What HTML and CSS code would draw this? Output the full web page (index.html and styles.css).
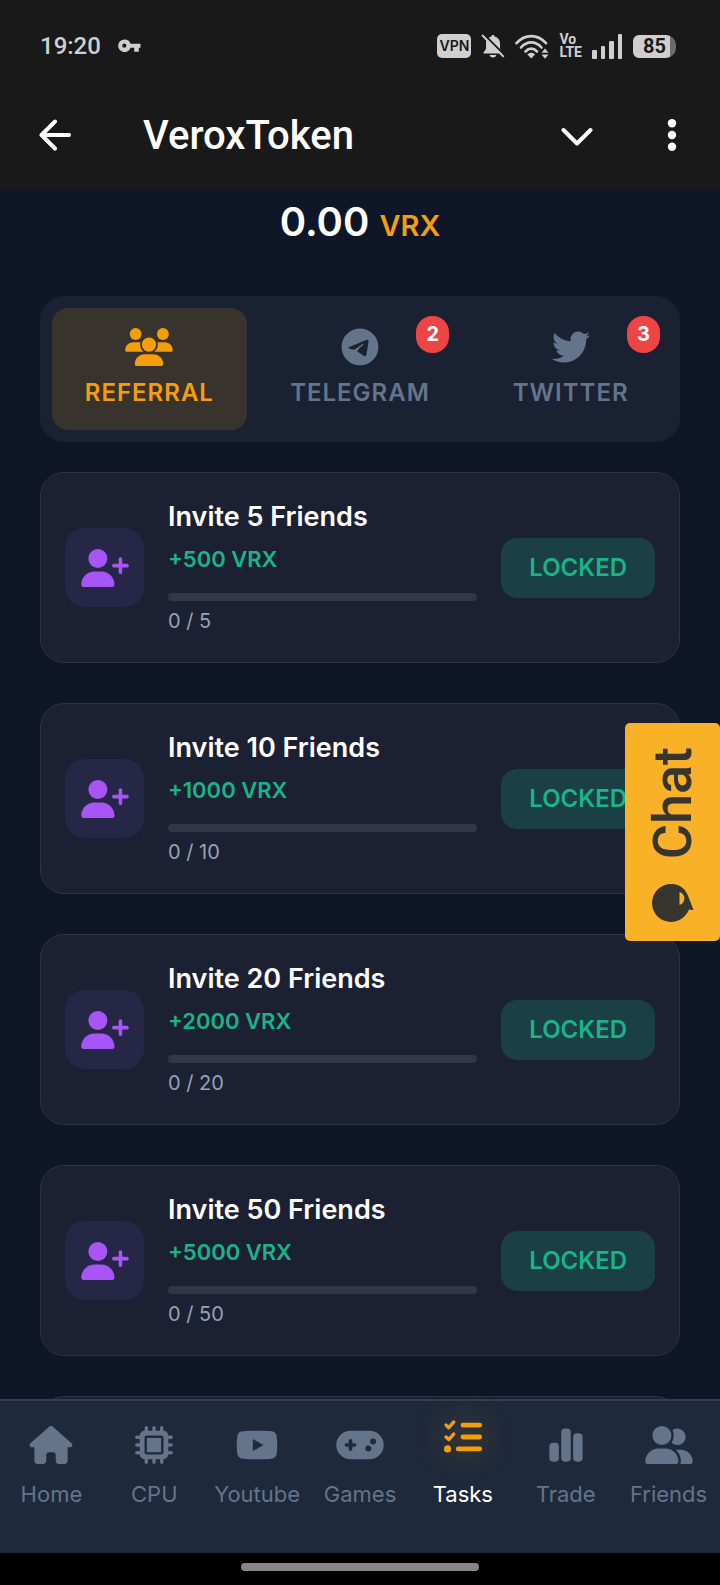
FILE: index.html
```html
<!DOCTYPE html>
<html lang="en">
<head>
    <meta charset="UTF-8">
    <meta name="viewport" content="width=device-width, initial-scale=1.0">
    <title>VeroxToken</title>
    <link rel="stylesheet" href="styles.css">
</head>
<body>
    <svg class="sprite" aria-hidden="true">
        <symbol id="user-plus" viewBox="0 0 640 512">
            <path d="M96 128a128 128 0 1 1 256 0A128 128 0 1 1 96 128zM0 482.3C0 383.8 79.8 304 178.3 304h91.4C368.2 304 448 383.8 448 482.3c0 16.4-13.3 29.7-29.7 29.7H29.7C13.3 512 0 498.7 0 482.3zM504 312V248H440c-13.3 0-24-10.7-24-24s10.7-24 24-24h64V136c0-13.3 10.7-24 24-24s24 10.7 24 24v64h64c13.3 0 24 10.7 24 24s-10.7 24-24 24H552v64c0 13.3-10.7 24-24 24s-24-10.7-24-24z"/>
        </symbol>
    </svg>

    <header class="top">
        <div class="status-bar">
            <span class="time">19:20</span>
            <svg class="key" width="23" height="14" viewBox="0 0 23 14">
                <path fill-rule="evenodd" d="M6.5 0.5a6.2 6.2 0 0 1 6 4.2H22.5V8.7H20.8V12.7H16.2V8.7H12.5A6.3 6.3 0 1 1 6.5 0.5zM6.3 4.6a2.1 2.1 0 1 0 0 4.2a2.1 2.1 0 0 0 0-4.2z"/>
            </svg>
            <div class="status-icons">
                <span class="vpn">VPN</span>
                <svg width="24" height="24" viewBox="0 0 24 24">
                    <path d="M12 1c1 0 1.6.6 1.6 1.5C17 3.300 19 6 19 9.500V15l2.500 3.500v1H2.500v-1L5 15V9.500C5 6 7 3.300 10.400 2.500C10.400 1.600 11 1 12 1zM8.500 21h7c-.5 1.700-1.800 2.500-3.500 2.500S9 22.700 8.500 21z"/>
                    <path class="bell-gap" d="M2.500 0L24.500 22"/>
                    <path class="bell-slash" d="M1 1L22.700 22.900"/>
                </svg>
                <svg width="34" height="25" viewBox="0 0 34 25">
                    <g class="wifi-arc">
                        <path d="M1.500 9.200C10 -.2 22.500 -.2 31 9.200"/>
                        <path d="M6 13.500C12 6.700 20.500 6.700 26.500 13.500"/>
                        <path d="M10.500 17.500C14 13.700 18.500 13.700 22 17.500"/>
                    </g>
                    <path d="M12.300 20.300C14.700 18.200 17.800 18.200 20.200 20.300L16.250 24.500zM26.500 18.700L30 14.500L33.500 18.700zM26.500 20.500H33.500L30 24.700z"/>
                </svg>
                <span class="volte">Vo<br>LTE</span>
                <svg width="31" height="25" viewBox="0 0 31 25">
                    <rect x="0" y="16" width="5" height="9" rx="1"/>
                    <rect x="9" y="12" width="4" height="13" rx="1"/>
                    <rect x="17" y="7" width="5" height="18" rx="1"/>
                    <rect x="26" y="0" width="4" height="25" rx="1"/>
                </svg>
                <span class="battery">85</span>
            </div>
        </div>
        <div class="app-bar">
            <button class="icon-btn" aria-label="Back">
                <svg width="32" height="32" viewBox="0 0 32 32"><path d="M30 16H2.500M16 2.500L2.500 16L16 29.500"/></svg>
            </button>
            <h1 class="app-title">VeroxToken</h1>
            <button class="icon-btn" aria-label="Minimize">
                <svg width="32" height="32" viewBox="0 0 32 32"><path d="M2.500 11L16 24.500L29.500 11"/></svg>
            </button>
            <button class="icon-btn menu-btn" aria-label="Menu">
                <svg width="10" height="32" viewBox="0 0 10 32"><circle cx="5" cy="4.200" r="4.200"/><circle cx="5" cy="16" r="4.200"/><circle cx="5" cy="27.800" r="4.200"/></svg>
            </button>
        </div>
    </header>

    <main class="content">
        <div class="balance">0.00 <span class="currency">VRX</span></div>

        <div class="tabs">
            <button class="tab active">
                <svg class="icon" viewBox="0 0 640 512">
                    <circle cx="140" cy="80" r="80"/>
                    <circle cx="508" cy="80" r="80"/>
                    <path d="M107 192h86c10 0 20 2 29 5C203 249 220 290 250 320H21C9 320 0 311 0 299C0 240 48 192 107 192zM533 192h-86c-10 0-20 2-29 5C437 249 420 290 390 320h229c12 0 21-9 21-21C640 240 592 192 533 192z"/>
                    <circle class="front-head" cx="320" cy="224" r="108"/>
                    <path d="M261 352h118c74 0 133 60 133 133c0 15-12 27-27 27H155c-15 0-27-12-27-27C128 412 188 352 261 352z"/>
                </svg>
                <span>REFERRAL</span>
            </button>
            <button class="tab">
                <svg class="icon" viewBox="0 0 496 512">
                    <path d="M248,8C111.033,8,0,119.033,0,256S111.033,504,248,504,496,392.967,496,256,384.967,8,248,8ZM362.952,176.66c-3.732,39.215-19.881,134.378-28.1,178.3-3.476,18.584-10.322,24.816-16.948,25.425-14.4,1.326-25.338-9.517-39.287-18.661-21.827-14.308-34.158-23.215-55.346-37.177-24.485-16.135-8.612-25,5.342-39.5,3.652-3.793,67.107-61.51,68.335-66.746.153-.655.3-3.1-1.154-4.384s-3.59-.849-5.135-.5q-3.283.746-104.608,69.142-14.845,10.194-26.894,9.934c-8.855-.191-25.888-5.006-38.551-9.123-15.531-5.048-27.875-7.717-26.8-16.291q.84-6.7,18.45-13.7,108.446-47.248,144.628-62.3c68.872-28.647,83.183-33.623,92.511-33.789,2.052-.034,6.639.474,9.61,2.885a10.452,10.452,0,0,1,3.53,6.716A43.765,43.765,0,0,1,362.952,176.66Z"/>
                </svg>
                <span>TELEGRAM</span>
                <span class="badge">2</span>
            </button>
            <button class="tab">
                <svg class="icon" viewBox="0 0 512 512">
                    <path d="M459.37 151.716c.325 4.548.325 9.097.325 13.645 0 138.72-105.583 298.558-298.558 298.558-59.452 0-114.68-17.219-161.137-47.106 8.447.974 16.568 1.299 25.34 1.299 49.055 0 94.213-16.568 130.274-44.832-46.132-.975-84.792-31.188-98.112-72.772 6.498.974 12.995 1.624 19.818 1.624 9.421 0 18.843-1.3 27.614-3.573-48.081-9.747-84.143-51.98-84.143-102.985v-1.299c13.969 7.797 30.214 12.67 47.431 13.319-28.264-18.843-46.781-51.005-46.781-87.391 0-19.492 5.197-37.36 14.294-52.954 51.655 63.675 129.3 105.258 216.365 109.807-1.624-7.797-2.599-15.918-2.599-24.04 0-57.828 46.782-104.934 104.934-104.934 30.213 0 57.502 12.67 76.67 33.137 23.715-4.548 46.456-13.32 66.599-25.34-7.798 24.366-24.366 44.833-46.132 57.827 21.117-2.273 41.584-8.122 60.426-16.243-14.292 20.791-32.161 39.308-52.628 54.253z"/>
                </svg>
                <span>TWITTER</span>
                <span class="badge">3</span>
            </button>
        </div>

        <div class="tasks">
            <div class="card">
                <div class="card-icon"><svg class="icon"><use href="#user-plus"/></svg></div>
                <div class="info">
                    <h3>Invite 5 Friends</h3>
                    <p class="reward">+500 VRX</p>
                    <progress value="0" max="5" aria-label="Invite 5 Friends"></progress>
                    <p class="count">0 / 5</p>
                </div>
                <button class="claim">LOCKED</button>
            </div>
            <div class="card">
                <div class="card-icon"><svg class="icon"><use href="#user-plus"/></svg></div>
                <div class="info">
                    <h3>Invite 10 Friends</h3>
                    <p class="reward">+1000 VRX</p>
                    <progress value="0" max="10" aria-label="Invite 10 Friends"></progress>
                    <p class="count">0 / 10</p>
                </div>
                <button class="claim">LOCKED</button>
            </div>
            <div class="card">
                <div class="card-icon"><svg class="icon"><use href="#user-plus"/></svg></div>
                <div class="info">
                    <h3>Invite 20 Friends</h3>
                    <p class="reward">+2000 VRX</p>
                    <progress value="0" max="20" aria-label="Invite 20 Friends"></progress>
                    <p class="count">0 / 20</p>
                </div>
                <button class="claim">LOCKED</button>
            </div>
            <div class="card">
                <div class="card-icon"><svg class="icon"><use href="#user-plus"/></svg></div>
                <div class="info">
                    <h3>Invite 50 Friends</h3>
                    <p class="reward">+5000 VRX</p>
                    <progress value="0" max="50" aria-label="Invite 50 Friends"></progress>
                    <p class="count">0 / 50</p>
                </div>
                <button class="claim">LOCKED</button>
            </div>
            <div class="card"></div>
        </div>
    </main>

    <button class="chat">
        <span>Chat</span>
        <svg width="42" height="38" viewBox="0 0 42 38">
            <path d="M19 0C29 0 34 6 36.500 13L41.500 26L37 25.500C34 33 27 38 19 38A19 19 0 0 1 19 0z"/>
            <path class="smile" d="M27.500 8C34 9.500 34 19.500 27.500 21z"/>
        </svg>
    </button>

    <nav class="bottom-nav">
        <a href="#">
            <svg class="icon" viewBox="0 0 576 512"><path d="M575.800 255.500c0 18-15 32.100-32 32.100h-32V472c0 22-18 40-40 40H392c-22 0-40-18-40-40V392c0-22-14-40-36-40h-56c-22 0-36 18-36 40v80c0 22-18 40-40 40H104c-22 0-40-18-40-40V287.600H32c-18 0-32-14-32-32.100c0-9 3-17 10-24L266.400 8c7-7 15-8 22-8s15 2 21 7L564.800 231.500c8 7 12 15 11 24z"/></svg>
            <span>Home</span>
        </a>
        <a href="#">
            <svg class="icon" viewBox="0 0 512 512">
                <path class="pins" d="M152 24V100M256 24V100M360 24V100M152 412V488M256 412V488M360 412V488M24 152H100M24 256H100M24 360H100M412 152H488M412 256H488M412 360H488"/>
                <path fill-rule="evenodd" d="M128 64H384a64 64 0 0 1 64 64V384a64 64 0 0 1-64 64H128a64 64 0 0 1-64-64V128a64 64 0 0 1 64-64zM160 128a32 32 0 0 0-32 32V352a32 32 0 0 0 32 32H352a32 32 0 0 0 32-32V160a32 32 0 0 0-32-32zM160 160H352V352H160z"/>
            </svg>
            <span>CPU</span>
        </a>
        <a href="#">
            <svg class="icon" viewBox="0 0 576 512"><path d="M549.655 124.083c-6.281-23.650-24.787-42.276-48.284-48.597C458.781 64 288 64 288 64S117.220 64 74.629 75.486c-23.497 6.322-42.003 24.947-48.284 48.597-11.412 42.867-11.412 132.305-11.412 132.305s0 89.438 11.412 132.305c6.281 23.650 24.787 41.500 48.284 47.821C117.220 448 288 448 288 448s170.780 0 213.371-11.486c23.497-6.321 42.003-24.171 48.284-47.821 11.412-42.867 11.412-132.305 11.412-132.305s0-89.438-11.412-132.305zm-317.510 213.508V175.185l142.739 81.205-142.739 81.201z"/></svg>
            <span>Youtube</span>
        </a>
        <a href="#">
            <svg class="icon" viewBox="0 0 640 512"><path fill-rule="evenodd" d="M192 64a192 192 0 0 0 0 384H448a192 192 0 0 0 0-384zM456 208a40 40 0 1 1 80 0a40 40 0 0 1-80 0zM392 304a40 40 0 1 1 80 0a40 40 0 0 1-80 0zM168 200a24 24 0 0 1 48 0v32h32a24 24 0 0 1 0 48h-32v32a24 24 0 0 1-48 0v-32h-32a24 24 0 0 1 0-48h32z"/></svg>
            <span>Games</span>
        </a>
        <a href="#" class="active">
            <svg class="icon" viewBox="0 0 512 512">
                <path class="checks" d="M28 96L64 130L130 56M28 256L64 290L130 216"/>
                <path class="lines" d="M256 96H480M256 256H480M192 416H480"/>
                <circle cx="48" cy="416" r="48"/>
            </svg>
            <span>Tasks</span>
        </a>
        <a href="#">
            <svg class="icon" viewBox="0 0 448 512"><rect x="0" y="224" width="128" height="256" rx="48"/><rect x="160" y="32" width="128" height="448" rx="48"/><rect x="320" y="96" width="128" height="384" rx="48"/></svg>
            <span>Trade</span>
        </a>
        <a href="#">
            <svg class="icon" viewBox="0 0 640 512"><path d="M96 128a128 128 0 1 1 256 0A128 128 0 1 1 96 128zM0 482.3C0 383.8 79.8 304 178.3 304h91.4C368.2 304 448 383.8 448 482.3c0 16.4-13.3 29.7-29.7 29.7H29.7C13.3 512 0 498.7 0 482.3zM609.3 512H471.4c5.4-9.4 8.6-20.3 8.6-32v-8c0-60.7-27.1-115.2-69.8-151.8c2.4-.1 4.7-.2 7.1-.2h61.4C567.8 320 640 392.2 640 481.3c0 17-13.8 30.7-30.7 30.7zM432 256c-31 0-59-12.6-79.3-32.9C372.4 196.5 384 163.6 384 128c0-26.8-6.6-52.1-18.3-74.3C384.3 40.1 407.2 32 432 32c61.9 0 112 50.1 112 112s-50.1 112-112 112z"/></svg>
            <span>Friends</span>
        </a>
    </nav>
    <div class="gesture-bar"><div class="handle"></div></div>
</body>
</html>
```

FILE: styles.css
```css
* {
    box-sizing: border-box;
}
body {
    margin: 0;
    height: 100vh;
    display: flex;
    flex-direction: column;
    position: relative;
    overflow: hidden;
    background-color: #0e1628;
    color: #fff;
    font-family: Inter, sans-serif;
}
button {
    font-family: inherit;
    border: none;
    padding: 0;
    background: none;
    color: inherit;
    cursor: pointer;
}
h1, h3, p {
    margin: 0;
}
svg {
    display: block;
    flex: none;
    fill: currentColor;
}
.sprite {
    position: absolute;
    width: 0;
    height: 0;
}
.icon {
    height: 38px;
    width: 48px;
}

/* phone status bar and title */
.top {
    flex: none;
    background-color: #191919;
    font-family: Roboto, sans-serif;
}
.status-bar {
    display: flex;
    align-items: center;
    height: 80px;
    padding: 12px 44px 0 40px;
    color: #cfcfcf;
}
.time {
    font-size: 24px;
    font-weight: 500;
}
.key {
    margin-left: 17px;
}
.status-icons {
    display: flex;
    align-items: center;
    gap: 10px;
    margin-left: auto;
}
.vpn {
    width: 34px;
    border-radius: 5px;
    background-color: #cfcfcf;
    color: #191919;
    font-family: Inter, sans-serif;
    font-size: 14px;
    font-weight: 600;
    line-height: 24px;
    text-align: center;
}
.bell-gap, .bell-slash {
    fill: none;
    stroke: #191919;
    stroke-width: 2;
}
.bell-slash {
    stroke: #cfcfcf;
}
.wifi-arc {
    fill: none;
    stroke: #cfcfcf;
    stroke-width: 2.6;
    stroke-linecap: round;
}
.volte {
    font-size: 14px;
    font-weight: 700;
    line-height: 13px;
}
.battery {
    width: 43px;
    border-radius: 6px 10px 10px 6px;
    background: linear-gradient(to right, #cfcfcf 37px, #6b6b6b 37px);
    color: #191919;
    font-size: 20px;
    font-weight: 700;
    line-height: 23px;
    text-align: center;
}
.app-bar {
    display: flex;
    align-items: center;
    height: 110px;
    padding: 0 43px 0 39px;
}
.app-title {
    flex: 1;
    margin-left: 72px;
    font-size: 40px;
    font-weight: 500;
}
.icon-btn path {
    fill: none;
    stroke: #fff;
    stroke-width: 4;
    stroke-linecap: round;
    stroke-linejoin: round;
}
.menu-btn {
    margin-left: 74px;
}

.content {
    flex: 1;
    min-height: 0;
    overflow: hidden;
    padding: 8px 40px 0;
}
.balance {
    display: flex;
    align-items: baseline;
    justify-content: center;
    gap: 10px;
    height: 48px;
    margin-bottom: 50px;
    font-size: 40px;
    font-weight: 600;
    line-height: 48px;
}
.currency {
    color: #f59e0b;
    font-size: 29px;
    font-weight: 600;
}

.tabs {
    display: flex;
    gap: 16px;
    margin-bottom: 30px;
    padding: 12px;
    border-radius: 24px;
    background-color: #1a2132;
}
.tab {
    position: relative;
    flex: 1;
    display: flex;
    flex-direction: column;
    align-items: center;
    gap: 11px;
    padding: 20px 0 21px;
    border-radius: 16px;
    color: #64748b;
    font-size: 24px;
    font-weight: 600;
    line-height: 32px;
    letter-spacing: 1px;
}
.tab.active {
    background-color: #39332d;
    color: #f59e0b;
}
.front-head {
    stroke: #39332d;
    stroke-width: 24;
}
.badge {
    position: absolute;
    top: 8px;
    right: 8px;
    width: 33px;
    border-radius: 16px;
    background-color: #ef4444;
    color: #fff;
    font-size: 20px;
    font-weight: 700;
    line-height: 37px;
    letter-spacing: 0;
}

.tasks {
    display: flex;
    flex-direction: column;
    gap: 40px;
}
.card {
    display: flex;
    align-items: center;
    gap: 24px;
    padding: 24px;
    border: 1px solid #2b3444;
    border-radius: 24px;
    background-color: #1b2132;
}
.card-icon {
    display: flex;
    align-items: center;
    justify-content: center;
    width: 79px;
    height: 79px;
    border-radius: 20px;
    background-color: #262646;
    color: #a855f7;
}
.info {
    flex: 1;
}
.info h3 {
    font-size: 27px;
    font-weight: 600;
    line-height: 40px;
}
.reward {
    margin: 8px 0 20px;
    color: #1bb487;
    font-size: 22px;
    font-weight: 600;
    line-height: 28px;
}
progress {
    display: block;
    width: 100%;
    height: 8px;
    margin-bottom: 4px;
    border: none;
    border-radius: 4px;
    background-color: #2f3748;
    overflow: hidden;
    appearance: none;
}
progress::-webkit-progress-bar {
    background-color: #2f3748;
}
progress::-webkit-progress-value {
    background-color: #10b981;
}
.count {
    color: #94a3b8;
    font-size: 20px;
    line-height: 33px;
}
.claim {
    padding: 0 28px;
    border-radius: 16px;
    background-color: #1a3f44;
    color: #19b488;
    font-size: 24px;
    font-weight: 600;
    line-height: 60px;
}

.chat {
    position: absolute;
    top: 723px;
    right: 0;
    display: flex;
    flex-direction: column;
    align-items: center;
    justify-content: space-between;
    width: 95px;
    height: 218px;
    padding: 24px 0 19px;
    border-radius: 5px;
    background-color: #f9b127;
    color: #363530;
    font-family: Roboto, sans-serif;
    font-size: 54px;
    font-weight: 500;
    line-height: 60px;
}
.chat span {
    writing-mode: vertical-rl;
    transform: rotate(180deg);
}
.smile {
    fill: #f9b127;
}

.bottom-nav {
    flex: none;
    display: flex;
    height: 154px;
    padding-top: 25px;
    border-top: 2px solid #333e50;
    background-color: #1e293b;
}
.bottom-nav a {
    flex: 1 1 0;
    min-width: 0;
    display: flex;
    flex-direction: column;
    align-items: center;
    gap: 16px;
    color: #64748b;
    font-size: 22px;
    line-height: 28px;
    text-decoration: none;
}
.bottom-nav span {
    color: #64748b;
}
.bottom-nav .active span {
    color: #fff;
}
.bottom-nav .active .icon {
    color: #f59e0b;
    transform: translateY(-8px);
    filter: drop-shadow(0 0 15px rgba(245, 158, 11, 0.4));
}
.pins, .checks, .lines {
    fill: none;
    stroke: currentColor;
    stroke-width: 46;
    stroke-linecap: round;
    stroke-linejoin: round;
}
.lines {
    stroke-width: 66;
}
.gesture-bar {
    flex: none;
    display: flex;
    justify-content: center;
    height: 32px;
    padding-top: 10px;
    background-color: #000;
}
.handle {
    width: 33%;
    height: 8px;
    border-radius: 4px;
    background-color: #868686;
}
```
